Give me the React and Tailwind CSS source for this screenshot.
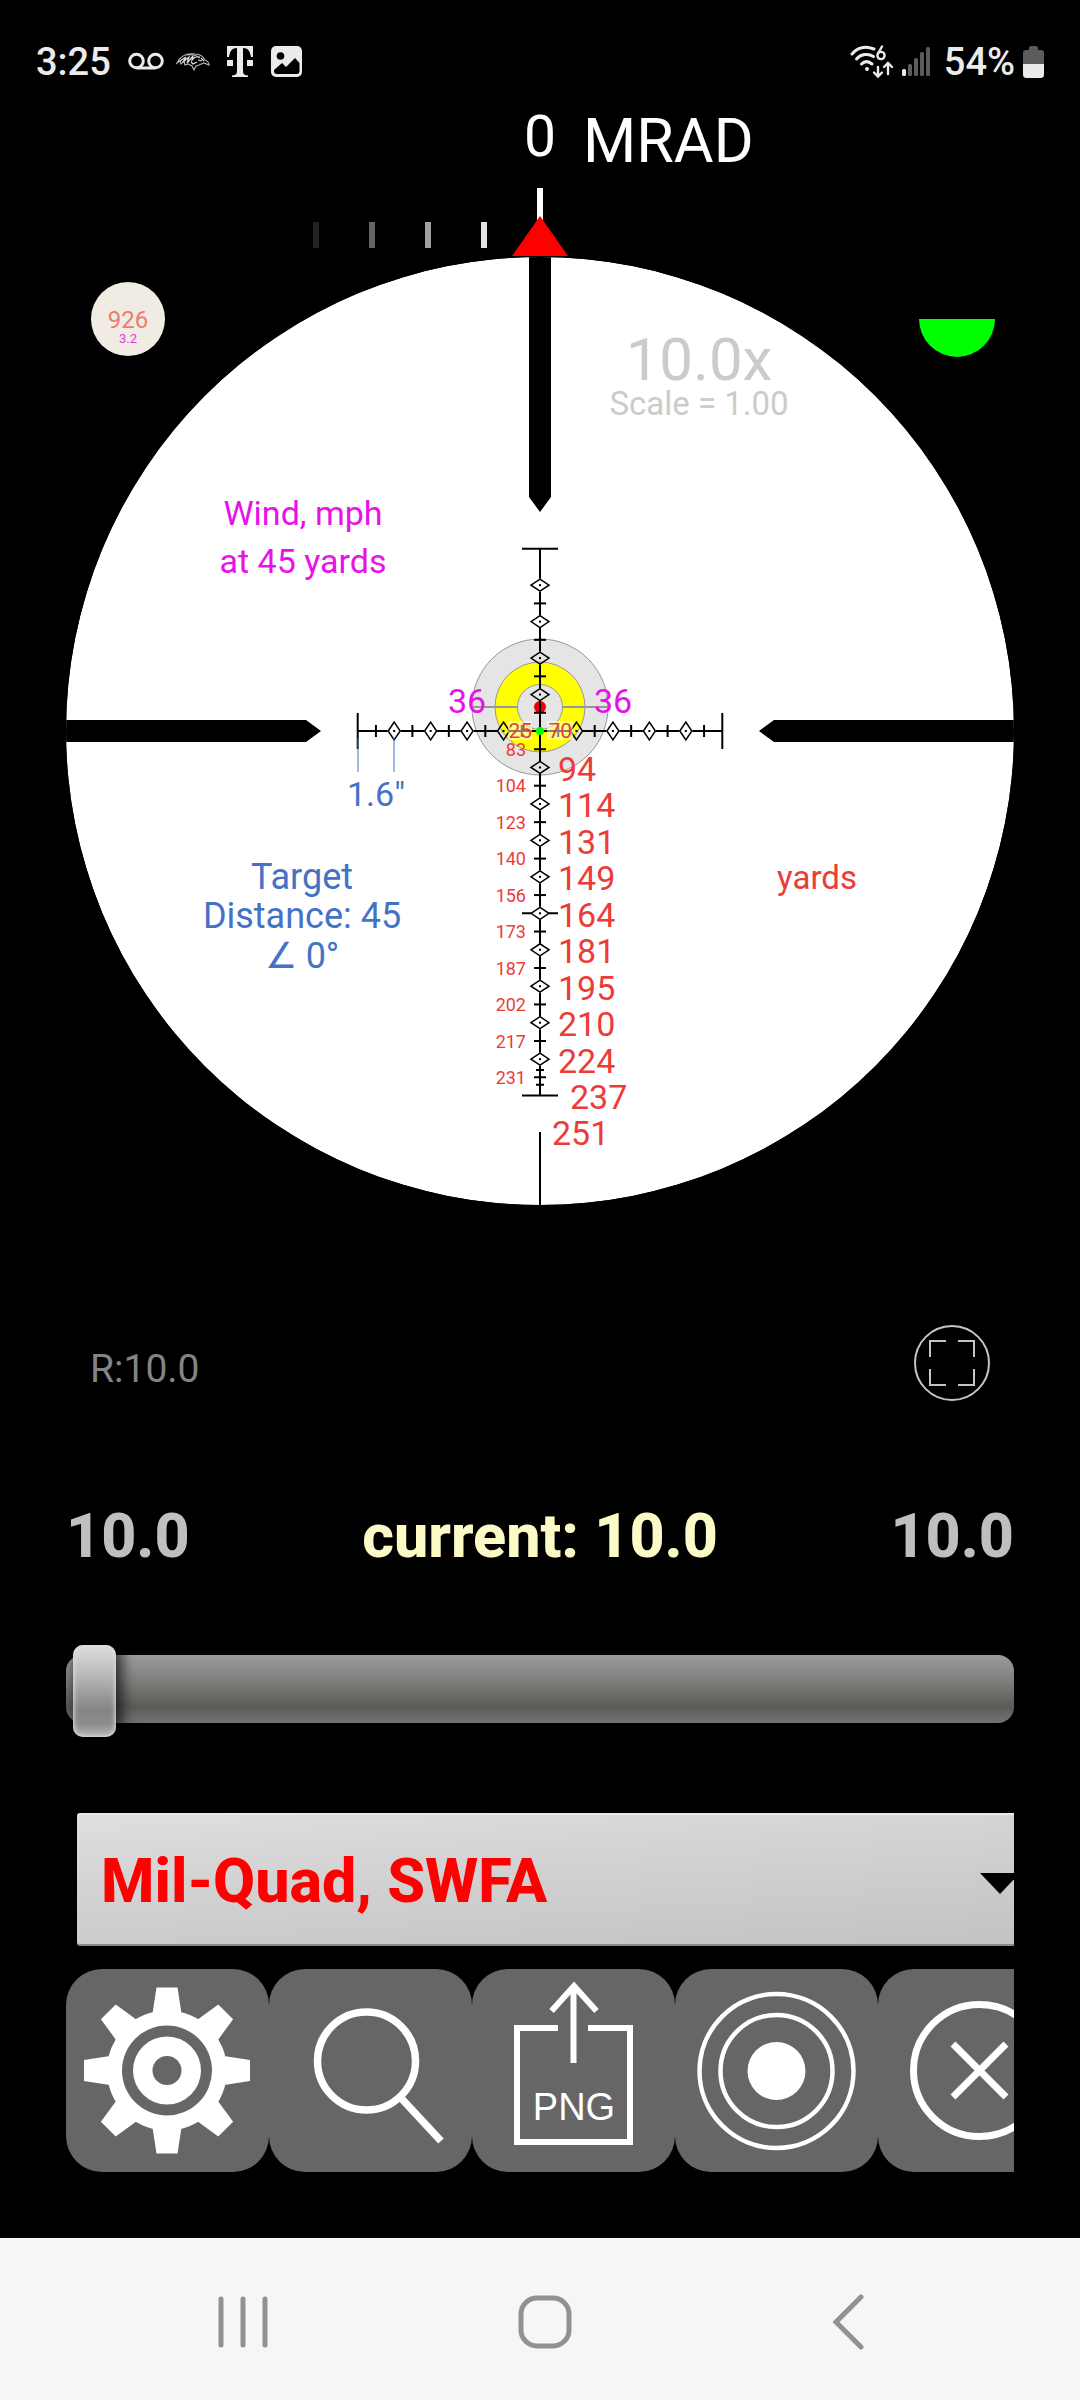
import React, { useState } from 'react';

// one mil on the reticle, in drawing units
const MIL = 36.46;

const holdsRight = [94, 114, 131, 149, 164, 181, 195, 210, 224];
const holdsLeft = [83, 104, 123, 140, 156, 173, 187, 202, 217, 231];

const turretTicks = [
  { x: -227, color: '#222222' },
  { x: -171, color: '#646464' },
  { x: -115, color: '#a0a0a0' },
  { x: -59, color: '#e2e2e2' },
];

// {------------------------------status bar icons------------------------------}

function VoicemailIcon() {
  return (
    <svg width="36" height="32" viewBox="0 0 36 32" fill="none" stroke="#ebebeb" strokeWidth="3">
      <circle cx="8.5" cy="15" r="6.8" />
      <circle cx="27.5" cy="15" r="6.8" />
      <path d="M8.5 22h19" />
    </svg>
  );
}

function RavenIcon() {
  return (
    <svg width="34" height="32" viewBox="0 0 34 32" fill="none" stroke="#b5b5b5" strokeWidth="1.2">
      <path d="M1 17C5 9 12 7 19 8c6 0 8 3 10 6 3 1 4 3 4 5l-5-2-5 2-3 1-2 4-2-4-4-2-3 1-1-4-3 3-1-3z" />
      <path d="M4 15l6-4-3 5 6-5-2 6 6-7-1 4 3-3h5M15 16l2 2 4-2M22 14l4 1M25 12l3 3" stroke="#e0e0e0" />
      <path d="M10 9c5-1 10 0 14 3" />
    </svg>
  );
}

function CarrierIcon() {
  return (
    <svg width="26" height="32" viewBox="0 0 26 32" fill="#ebebeb">
      <path d="M0 0h26v11h-2C23 5 21 2 16 2v23c0 3 1 4 5 4.500V31H5v-1.500c4-.5 5-1.500 5-4.500V2C5 2 3 5 2 11H0z" />
      <path d="M0 14h6v6H0zM20 14h6v6h-6z" />
    </svg>
  );
}

function GalleryIcon() {
  return (
    <svg width="32" height="32" viewBox="0 0 32 32">
      <rect x="0" y="0" width="31" height="31" rx="5" fill="#ebebeb" />
      <circle cx="9.500" cy="10" r="3.800" fill="#000" />
      <path d="M3 24l8-7 4 4 9-9 4.500 5v8c0 2-1 3-3 3H6c-2 0-3-1-3-3z" fill="#000" />
    </svg>
  );
}

function WifiIcon() {
  return (
    <svg width="44" height="34" viewBox="0 0 44 34" fill="none" stroke="#ebebeb" strokeWidth="3" strokeLinecap="round">
      <path d="M2 9C8 2 16 1 24 4" />
      <path d="M6.500 14C11 9 18 8 23.500 11.500" />
      <path d="M11.500 19c3-3 7-3 10.500 0" />
      <circle cx="17" cy="24" r="2" fill="#ebebeb" stroke="none" />
      <g strokeWidth="2.400">
        <circle cx="31" cy="10.500" r="3.600" />
        <path d="M28 8.500L32 1.500" />
        <path d="M28 22v9M24 27.500l4 4 4-4M38 29V18.500M34 22l4-4 4 4" />
      </g>
    </svg>
  );
}

function SignalIcon() {
  return (
    <svg width="28" height="32" viewBox="0 0 28 32" fill="#5c5c5c">
      <rect x="0" y="23" width="4" height="7" rx="1.500" fill="#ebebeb" />
      <rect x="6" y="18" width="4" height="12" rx="1.500" />
      <rect x="12" y="12" width="4" height="18" rx="1.500" />
      <rect x="18" y="6" width="4" height="24" rx="1.500" />
      <rect x="24" y="1" width="4" height="29" rx="1.500" />
    </svg>
  );
}

function BatteryIcon() {
  return (
    <svg width="21" height="32" viewBox="0 0 21 32">
      <path d="M6 2c0-1 1-2 2-2h5c1 0 2 1 2 2v2h3c2 0 3 1 3 3v11H0V7c0-2 1-3 3-3h3z" fill="#5c5c5c" />
      <path d="M0 18h21v10c0 3-1 4-4 4H4c-3 0-4-1-4-4z" fill="#ebebeb" />
    </svg>
  );
}

function StatusBar() {
  return (
    <header className="flex h-[88px] items-center justify-between px-[36px] pt-[36px] text-[38px] leading-[50px] font-medium text-[#ebebeb]">
      <div className="flex items-center">
        <span className="mr-[17px]">3:25</span>
        <span className="mr-[12px]"><VoicemailIcon /></span>
        <span className="mr-[17px]"><RavenIcon /></span>
        <span className="mr-[18px]"><CarrierIcon /></span>
        <GalleryIcon />
      </div>
      <div className="flex items-center">
        <span className="mr-[8px]"><WifiIcon /></span>
        <span className="mr-[14px]"><SignalIcon /></span>
        <span className="mr-[8px]">54%</span>
        <BatteryIcon />
      </div>
    </header>
  );
}

// {------------------------------reticle------------------------------}

// diamond on one of the axes, long side across the axis
function Diamond({ x, y, vertical }) {
  const a = vertical ? 9 : 6;
  const b = vertical ? 6 : 9;
  return (
    <g transform={`translate(${x} ${y})`}>
      <path d={`M${-a} 0L0 ${-b}L${a} 0L0 ${b}Z`} fill="none" stroke="#000" strokeWidth="1.5" />
      <rect x="-1" y="-1" width="2" height="2" fill="#000" stroke="none" />
    </g>
  );
}

function Reticle() {
  const upMarks = [1, 2, 3, 4];
  const downMarks = [1, 2, 3, 4, 5, 6, 7, 8, 9];
  const sideMarks = [-4, -3, -2, -1, 1, 2, 3, 4];
  const gap = 6.5;
  return (
    <g stroke="#000" strokeWidth="2">
      {/* thick posts */}
      <g stroke="none" fill="#000">
        <path d="M-11 -480H11V-234L0 -219L-11 -234Z" />
        <path d="M-480 -11V11H-234L-219 0L-234 -11Z" />
        <path d="M480 -11V11H234L219 0L234 -11Z" />
      </g>
      <path d={`M0 ${11 * MIL}V474`} />

      {/* axis lines, broken at every diamond */}
      {[-4, -3, -2, -1, 0, 1, 2, 3, 4, 5, 6, 7, 8, 9].map((m) => (
        <path
          key={m}
          d={`M0 ${m * MIL + (m === 0 ? 0 : gap)}V${(m + 1) * MIL - (m === 9 || m === -1 ? 0 : gap)}`}
        />
      ))}
      <path d={`M0 ${-5 * MIL}V${-4 * MIL - gap}`} />
      {[-5, -4, -3, -2, -1, 0, 1, 2, 3, 4].map((m) => (
        <path
          key={m}
          d={`M${m * MIL + (m === 0 || m === -5 ? 0 : gap)} 0H${(m + 1) * MIL - (m === -1 || m === 4 ? 0 : gap)}`}
        />
      ))}

      {/* end caps */}
      <path d={`M-18 ${-5 * MIL}h36M-18 ${10 * MIL}h36`} />
      <path d={`M-18 ${5 * MIL}h9M9 ${5 * MIL}h9`} />
      <path d={`M${-5 * MIL} -18v36M${5 * MIL} -18v36`} />

      {/* half mil ticks */}
      {[-3.5, -2.5, -1.5, -0.5, 0.5, 1.5, 2.5, 3.5, 4.5, 5.5, 6.5, 7.5, 8.5, 9.5].map((m) => (
        <path key={m} d={`M-6 ${m * MIL}h12`} />
      ))}
      {[-4.5, -3.5, -2.5, -1.5, -0.5, 0.5, 1.5, 2.5, 3.5, 4.5].map((m) => (
        <path key={m} d={`M${m * MIL} -6v12`} />
      ))}
      <path d={`M-4 ${9.3 * MIL}h8M-4 ${9.7 * MIL}h8`} />

      {upMarks.map((m) => <Diamond key={m} x={0} y={-m * MIL} vertical />)}
      {downMarks.map((m) => <Diamond key={m} x={0} y={m * MIL} vertical />)}
      {sideMarks.map((m) => <Diamond key={m} x={m * MIL} y={0} />)}
    </g>
  );
}

function Target() {
  return (
    <g transform="translate(0 -24)" stroke="#979797" strokeWidth="1">
      <circle r="68" fill="#e5e5e5" />
      <circle r="45" fill="#ffff00" />
      <circle r="22.500" fill="#e5e5e5" />
      <path d="M-68 0h45.500M22.500 0h45.500" strokeWidth="2" />
      <circle r="6" fill="#f00000" stroke="none" />
    </g>
  );
}

function ScopeView() {
  return (
    <svg className="block w-full" viewBox="-474 -643 948 1117" role="img" aria-label="Scope view">
      <defs>
        <clipPath id="lens">
          <circle r="474" />
        </clipPath>
      </defs>

      {/* turret */}
      <g fill="#fff">
        <text x="0" y="-575" fontSize="57" textAnchor="middle">0</text>
        <text x="43" y="-569" fontSize="61">MRAD</text>
        <rect x="-3" y="-543" width="6" height="40" />
      </g>
      {turretTicks.map((t) => (
        <rect key={t.x} x={t.x} y="-509" width="6" height="26" fill={t.color} />
      ))}
      <path d="M-28 -475L0 -515L28 -475Z" fill="#ff0000" />

      {/* corner badges */}
      <circle cx="-412" cy="-412" r="37" fill="#f0ece3" />
      <text x="-412" y="-403" fontSize="24" textAnchor="middle" fill="#ee7a72">926</text>
      <text x="-412" y="-388" fontSize="13" textAnchor="middle" fill="#d83ce0">3.2</text>
      <path d="M379 -412H455A38 38 0 0 1 379 -412Z" fill="#00ff00" />

      <g clipPath="url(#lens)">
        <circle r="474" fill="#fff" />
        <Target />
        <Reticle />

        {/* size bracket */}
        <path d="M-182 7V41M-146 7V41" stroke="#4472c4" strokeWidth="1" />

        <rect x="-32" y="-10" width="24" height="19" fill="#fff" opacity="0.5" />
        <rect x="7" y="-10" width="26" height="19" fill="#fff" opacity="0.5" />
      </g>
      <circle r="4" fill="#00ff00" />

      <g fill="#cbcbcb" textAnchor="middle">
        <text x="159" y="-351" fontSize="60">10.0x</text>
        <text x="159" y="-316" fontSize="33">Scale = 1.00</text>
      </g>

      <g fill="#e812e8" fontSize="34" textAnchor="middle">
        <text x="-237" y="-206">Wind, mph</text>
        <text x="-237" y="-158">at 45 yards</text>
        <text x="-73" y="-18">36</text>
        <text x="73" y="-18">36</text>
      </g>

      <g fill="#4472c4" fontSize="36" textAnchor="middle">
        <text x="-164" y="75" fontSize="34">1.6"</text>
        <text x="-238" y="158">Target</text>
        <text x="-238" y="197">Distance: 45</text>
        <text x="-238" y="237">∠ 0°</text>
      </g>

      <g fill="#ec3c38" fontSize="34">
        {holdsRight.map((yards, i) => (
          <text key={yards} x="18" y={50 + i * MIL}>{yards}</text>
        ))}
        <text x="30" y="378">237</text>
        <text x="12" y="414">251</text>
        <text x="277" y="158" fontSize="33" textAnchor="middle">yards</text>
      </g>
      <g fill="#ec3c38" fontSize="18" textAnchor="end">
        {holdsLeft.map((yards, i) => (
          <text key={yards} x="-14" y={25 + i * MIL}>{yards}</text>
        ))}
        <text x="-8" y="7" fontSize="21">25</text>
        <text x="32" y="7" fontSize="21">70</text>
      </g>
    </svg>
  );
}

// {------------------------------toolbar icons------------------------------}

function GearIcon() {
  return (
    <svg viewBox="0 0 203 203" className="size-full">
      <g transform="translate(101 101.5)" fill="#fff">
        <circle r="60" />
        {[0, 45, 90, 135, 180, 225, 270, 315].map((deg) => (
          <path key={deg} d="M-14.500 -57L-10.500 -83H10.500L14.500 -57Z" transform={`rotate(${deg})`} />
        ))}
        <circle r="45" fill="#666" />
        <circle r="34" />
        <circle r="14.500" fill="#666" />
      </g>
    </svg>
  );
}

function SearchIcon() {
  return (
    <svg viewBox="0 0 203 203" className="size-full" fill="none" stroke="#fff" strokeWidth="7.500">
      <circle cx="97.500" cy="92" r="49" />
      <path d="M132 129L172 172" />
    </svg>
  );
}

function ExportIcon() {
  return (
    <svg viewBox="0 0 203 203" className="size-full" fill="none" stroke="#fff" strokeWidth="6">
      <path d="M86 59H45V173H158V59H116" />
      <path d="M101.500 94V18M79.500 42L102 17L124.500 42" />
      <text x="102" y="151" fontSize="38" textAnchor="middle" fill="#fff" stroke="none" className="font-['Liberation_Sans',sans-serif]">PNG</text>
    </svg>
  );
}

function RecordIcon() {
  return (
    <svg viewBox="0 0 203 203" className="size-full" fill="none" stroke="#fff" strokeWidth="4.500">
      <circle cx="101.500" cy="102" r="77" />
      <circle cx="101.500" cy="102" r="56" />
      <circle cx="101.500" cy="102" r="29" fill="#fff" stroke="none" />
    </svg>
  );
}

function CloseIcon() {
  return (
    <svg viewBox="0 0 203 203" className="size-full" fill="none" stroke="#fff" strokeWidth="7">
      <circle cx="101.500" cy="101.500" r="66" />
      <path d="M75 75L128 128M128 75L75 128" />
    </svg>
  );
}

const tools = [
  { label: 'Settings', Icon: GearIcon },
  { label: 'Search', Icon: SearchIcon },
  { label: 'Export PNG', Icon: ExportIcon },
  { label: 'Target', Icon: RecordIcon },
  { label: 'Close', Icon: CloseIcon },
];

// {------------------------------bottom navigation------------------------------}

function NavBar() {
  return (
    <nav className="grid h-[162px] grid-cols-[1fr_118px_1fr] items-center bg-[#f6f6f6] px-[184px] pt-[6px]">
      <button type="button" aria-label="Recents" className="flex size-[118px] items-center justify-center">
        <svg width="56" height="56" viewBox="0 0 56 56" stroke="#919191" strokeWidth="5" strokeLinecap="round">
          <path d="M6 5v46M28 5v46M50 5v46" />
        </svg>
      </button>
      <button type="button" aria-label="Home" className="flex size-[118px] items-center justify-center pl-[10px]">
        <svg width="56" height="56" viewBox="0 0 56 56" fill="none" stroke="#919191" strokeWidth="5">
          <rect x="4" y="4" width="48" height="48" rx="16" />
        </svg>
      </button>
      <button type="button" aria-label="Back" className="flex size-[118px] items-center justify-center justify-self-end pl-[22px]">
        <svg width="56" height="56" viewBox="0 0 56 56" fill="none" stroke="#919191" strokeWidth="5" strokeLinecap="round">
          <path d="M41 3L16 28L41 53" />
        </svg>
      </button>
    </nav>
  );
}

function App() {
  const [zoom, setZoom] = useState(0.8);
  const [reticle, setReticle] = useState('mil-quad');

  return (
    <div className="flex min-h-screen flex-col bg-black font-[Roboto,sans-serif]">
      <StatusBar />

      <main className="flex grow flex-col px-[66px] pb-[66px]">
        <ScopeView />

        <div className="mt-[120px] flex h-[76px] items-center justify-between px-[24px]">
          <span className="pt-[12px] text-[39px] leading-[48px] text-[#848484]">R:10.0</span>
          <button type="button" aria-label="Full screen" className="size-[76px]">
            <svg viewBox="0 0 76 76" fill="none" stroke="#c4c4c4" strokeWidth="2">
              <circle cx="38" cy="38" r="37" />
              <path d="M16 32V16H32M44 16H60V32M60 44V60H44M32 60H16V44" />
            </svg>
          </button>
        </div>

        {/* {------------------------------magnification------------------------------} */}

        <div className="mt-[100px] grid grid-cols-[1fr_auto_1fr] text-[61px] leading-[70px] font-extrabold text-[#bfbfbf]">
          <span>10.0</span>
          <label htmlFor="zoom" className="text-[#fcfbc8]">current: 10.0</label>
          <span className="text-right">10.0</span>
        </div>
        <input
          id="zoom"
          type="range"
          min="0"
          max="100"
          step="0.1"
          value={zoom}
          onChange={(e) => setZoom(Number(e.target.value))}
          className="mt-[84px] block h-[68px] w-full appearance-none bg-transparent [&::-webkit-slider-runnable-track]:h-[68px] [&::-webkit-slider-runnable-track]:rounded-2xl [&::-webkit-slider-runnable-track]:bg-[linear-gradient(#9b9b9b,#858684_30%,#5a5c57_76%,#727371)] [&::-webkit-slider-thumb]:-mt-[10px] [&::-webkit-slider-thumb]:h-[92px] [&::-webkit-slider-thumb]:w-[43px] [&::-webkit-slider-thumb]:appearance-none [&::-webkit-slider-thumb]:rounded-[10px] [&::-webkit-slider-thumb]:bg-[linear-gradient(#dedede,#bdbdbd_30%,#858585_70%,#8c8c8c_85%,#b5b5b5)] [&::-webkit-slider-thumb]:shadow-[inset_0_0_4px_1px_#dcdcdc,4px_2px_14px_2px_rgba(0,0,0,0.7)]"
        />

        {/* {------------------------------reticle select------------------------------} */}

        <div className="relative mt-[90px] overflow-hidden pl-[11px]">
          <select
            aria-label="Reticle"
            value={reticle}
            onChange={(e) => setReticle(e.target.value)}
            className="block h-[133px] w-full appearance-none rounded-l-[3px] border-y-2 border-t-[#e9e9e9] border-b-[#8a8a8a] bg-[linear-gradient(176deg,#dfdfdf,#d4d4d4_35%,#c3c3c3)] pt-[4px] pl-[24px] text-[61px] font-extrabold text-[#ff0000]"
          >
            <option value="mil-quad">Mil-Quad, SWFA</option>
          </select>
          <svg className="pointer-events-none absolute top-[60px] -right-[6px]" width="40" height="21" viewBox="0 0 40 21">
            <path d="M0 0H40L20 21Z" fill="#000" />
          </svg>
        </div>

        {/* {------------------------------toolbar------------------------------} */}

        <div className="mt-[23px] flex overflow-hidden">
          {tools.map(({ label, Icon }) => (
            <button key={label} type="button" aria-label={label} className="size-[203px] shrink-0 rounded-[36px] bg-[#666]">
              <Icon />
            </button>
          ))}
        </div>
      </main>

      <NavBar />
    </div>
  );
}

export default App;
